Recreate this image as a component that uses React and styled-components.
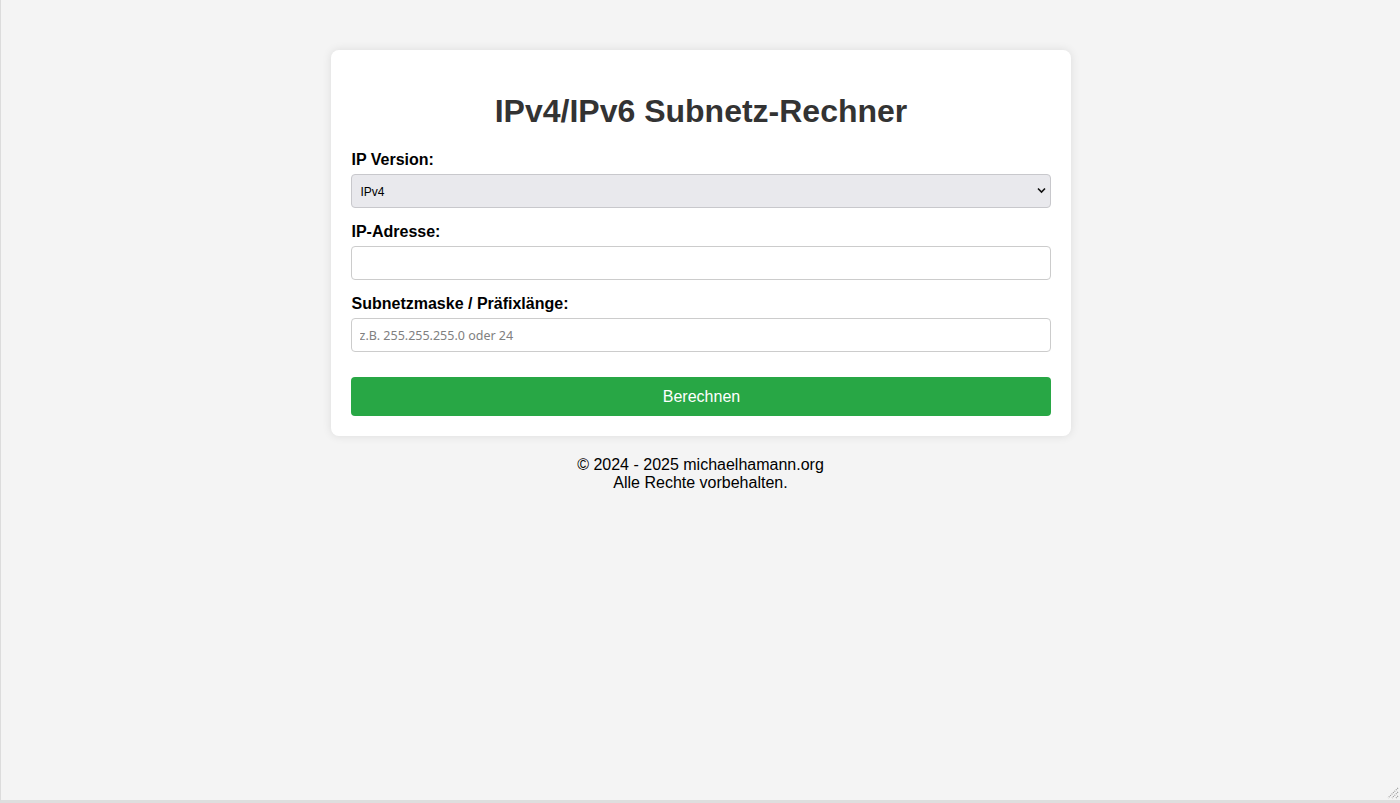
import React from "react";
import styled, { createGlobalStyle } from "styled-components";

const Global = createGlobalStyle`
  html, body { margin: 0; padding: 0; }
  body { background: #f4f4f4; font-family: "Liberation Sans", Arial, sans-serif; }
  * { box-sizing: border-box; }
`;

const Frame = styled.div`
  position: relative;
  width: 1400px;
  height: 803px;
  background: #f4f4f4;
  border-left: 1px solid #dcdcdc;
  border-bottom: 3px solid #dedede;
  padding-top: 50px;
  display: flex;
  flex-direction: column;
  align-items: center;
  overflow: hidden;
`;

const Card = styled.div`
  width: 740px;
  background: #fff;
  border-radius: 8px;
  box-shadow: 0 0 10px rgba(0, 0, 0, 0.1);
  padding: 20px;
  display: flex;
  flex-direction: column;
`;

const Title = styled.h1`
  margin: 22.5px 0 20.5px;
  font-size: 32px;
  line-height: 37px;
  font-weight: bold;
  color: #333;
  text-align: center;
  padding-left: 1px;
`;

const Field = styled.div`
  display: flex;
  flex-direction: column;
  margin-bottom: ${(p) => p.$mb || 14}px;
`;

const Label = styled.label`
  font-size: 16px;
  line-height: 18px;
  font-weight: bold;
  color: #000;
  padding-top: 1px;
  margin-bottom: 5px;
  padding-left: ${(p) => p.$shift || 0}px;
`;

const SelectWrap = styled.div`
  position: relative;
  width: 700px;
`;

const Select = styled.select`
  appearance: none;
  -webkit-appearance: none;
  width: 100%;
  height: 34px;
  padding: 2px 9px 0;
  border: 1px solid #c8c8cc;
  border-radius: 4px;
  background: #e9e9ed;
  color: #000;
  font-family: "Liberation Sans", Arial, sans-serif;
  font-size: 12px;
  outline: none;
`;

const Chevron = styled.svg`
  position: absolute;
  right: 5px;
  top: 13px;
  pointer-events: none;
`;

const Input = styled.input`
  width: 700px;
  height: 34px;
  padding: 1px 8px 0;
  border: 1px solid #cccccc;
  border-radius: 4px;
  background: #fff;
  font-family: "Noto Sans", "DejaVu Sans", sans-serif;
  font-size: 12.5px;
  color: #000;
  outline: none;
  &::placeholder { color: #808080; }
`;

const Button = styled.button`
  margin-top: 11px;
  width: 700px;
  height: 39px;
  padding: 1px 0 0 2px;
  border: none;
  border-radius: 4px;
  background: #28a745;
  color: #fff;
  font-family: "Liberation Sans", Arial, sans-serif;
  font-size: 16px;
  cursor: pointer;
`;

const Footer = styled.footer`
  margin-top: 20px;
  text-align: center;
  font-size: 16px;
  line-height: 18px;
  color: #000;
`;

const Grip = styled.svg`
  position: absolute;
  right: 1px;
  bottom: 1px;
`;

export default function App() {
  return (
    <>
      <Global />
      <Frame>
        <Card>
          <Title>IPv4/IPv6 Subnetz-Rechner</Title>
          <Field>
            <Label htmlFor="ipv" $shift={1}>IP Version:</Label>
            <SelectWrap>
              <Select id="ipv" defaultValue="4">
                <option value="4">IPv4</option>
                <option value="6">IPv6</option>
              </Select>
              <Chevron width="9" height="7" viewBox="0 0 9 7">
                <path d="M1 1.5 L4.5 5 L8 1.5" fill="none" stroke="#111" strokeWidth="1.6" />
              </Chevron>
            </SelectWrap>
          </Field>
          <Field>
            <Label htmlFor="ip" $shift={1}>IP-Adresse:</Label>
            <Input id="ip" type="text" />
          </Field>
          <Field $mb={14}>
            <Label htmlFor="mask" $shift={1}>Subnetzmaske / Präfixlänge:</Label>
            <Input id="mask" type="text" placeholder="z.B. 255.255.255.0 oder 24" />
          </Field>
          <Button>Berechnen</Button>
        </Card>
        <Footer>
          © 2024 - 2025 michaelhamann.org
          <br />
          Alle Rechte vorbehalten.
        </Footer>
        <Grip width="14" height="14" viewBox="0 0 14 14">
          <path d="M13 3 L3 13 M13 7 L7 13 M13 11 L11 13" stroke="#9a9a9a" strokeWidth="1.2" strokeDasharray="1 1" />
        </Grip>
      </Frame>
    </>
  );
}
